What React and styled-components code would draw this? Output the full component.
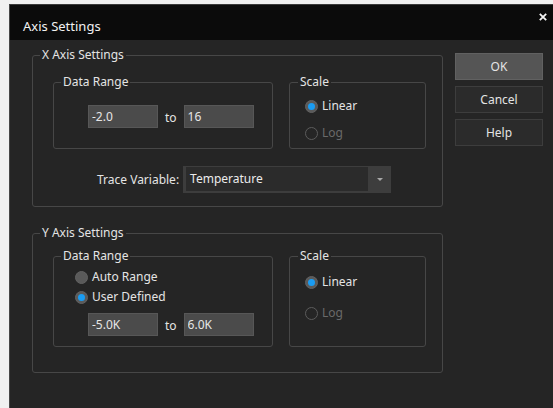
import React from 'react';
import styled, { createGlobalStyle } from 'styled-components';

const GlobalStyle = createGlobalStyle`
  html, body {
    margin: 0;
    padding: 0;
    background: #f0f0f0;
  }
  * { box-sizing: border-box; }
`;

const Dialog = styled.div`
  margin: 4px 0 0 9px;
  width: 544px;
  height: 404px;
  background: #252525;
  border-left: 1px solid #474747;
  border-top: 1px solid #3a3a3a;
  display: flex;
  flex-direction: column;
  font-family: "Noto Sans", "Open Sans", sans-serif;
  font-size: 12px;
  color: #e4e4e4;
  overflow: hidden;
`;

const TitleBar = styled.div`
  height: 35px;
  flex: none;
  background: #0b0b0b;
  display: flex;
  justify-content: space-between;
  align-items: flex-start;
  padding-left: 13px;
`;

const Title = styled.div`
  padding-top: 13px;
  font-size: 13px;
  line-height: 16px;
  color: #f2f2f2;
`;

const CloseButton = styled.button`
  margin: 8px 6px 0 0;
  padding: 0;
  width: 8px;
  height: 8px;
  border: 0;
  background: none;
  display: flex;
  svg { display: block; }
`;

const Body = styled.div`
  flex: 1;
  display: flex;
  align-items: flex-start;
  gap: 12px;
  padding: 7px 0 0 22px;
`;

const Main = styled.div`
  width: 411px;
  display: flex;
  flex-direction: column;
  gap: 18px;
`;

const Group = styled.fieldset`
  margin: 0;
  padding: 0;
  min-width: 0;
  border: 1px solid #474747;
  border-radius: 3px;
  width: ${p => (p.$width ? `${p.$width}px` : 'auto')};
`;

const Legend = styled.legend`
  margin-left: ${p => p.$indent}px;
  padding: 0 2px;
  font-size: 12px;
  line-height: 16px;
  color: #e4e4e4;
`;

const GroupContent = styled.div`
  padding: ${p => p.$pad};
  display: flex;
  flex-direction: column;
  gap: ${p => p.$gap || 0}px;
`;

const GroupRow = styled.div`
  display: flex;
  align-items: stretch;
  gap: 16px;
`;

const RangeRow = styled.div`
  display: flex;
  align-items: center;
  gap: 7px;
  margin-left: ${p => p.$indent || 0}px;
  margin-top: ${p => p.$top || 0}px;
`;

const TextBox = styled.input`
  width: 70px;
  height: 23px;
  padding: 0 0 0 3px;
  margin: 0;
  background: #4b4b4b;
  border: 1px solid #575757;
  color: #e6e6e6;
  font-family: inherit;
  font-size: 12px;
  outline: none;
`;

const To = styled.span`
  line-height: 16px;
  padding-top: 3px;
`;

const RadioRow = styled.label`
  display: flex;
  align-items: center;
  gap: 4px;
  height: 16px;
  line-height: 16px;
  color: ${p => (p.$disabled ? '#6a6a6a' : '#e4e4e4')};
`;

const RadioDot = styled.span`
  width: 13px;
  height: 13px;
  flex: none;
  border-radius: 50%;
  display: flex;
  align-items: center;
  justify-content: center;
  background: ${p => (p.$disabled ? 'transparent' : '#5a5a5a')};
  border: 1px solid ${p => (p.$disabled ? '#5c5c5c' : '#626262')};

  &::after {
    content: '';
    display: ${p => (p.$checked ? 'block' : 'none')};
    width: 7px;
    height: 7px;
    border-radius: 50%;
    background: #1a9cf2;
  }
`;

const TraceRow = styled.div`
  display: flex;
  align-items: center;
  gap: 4px;
  padding-left: 44px;
  margin-top: 17px;
`;

const FieldLabel = styled.span`
  line-height: 16px;
`;

const Combo = styled.div`
  width: 208px;
  height: 27px;
  background: #3d3d3d;
  padding: 1px 0 2px 3px;
  display: flex;
`;

const ComboField = styled.div`
  width: 182px;
  background: #2b2b2b;
  padding-left: 4px;
  line-height: 24px;
  color: #ececec;
`;

const ComboArrow = styled.div`
  flex: 1;
  display: flex;
  align-items: center;
  justify-content: center;
  padding-top: 1px;

  &::after {
    content: '';
    border-left: 3px solid transparent;
    border-right: 3px solid transparent;
    border-top: 3px solid #a8a8a8;
  }
`;

const ButtonColumn = styled.div`
  width: 88px;
  margin-top: 6px;
  display: flex;
  flex-direction: column;
  gap: 6px;
`;

const Button = styled.button`
  height: 27px;
  margin: 0;
  padding: 0;
  font-family: inherit;
  font-size: 12px;
  color: #e4e4e4;
  background: ${p => (p.$primary ? '#555555' : '#2b2b2b')};
  border: 1px solid ${p => (p.$primary ? '#616161' : '#3d3d3d')};
`;

function Radio({ checked, disabled, children }) {
  return (
    <RadioRow $disabled={disabled}>
      <RadioDot $checked={checked} $disabled={disabled} />
      {children}
    </RadioRow>
  );
}

function Range({ from, to, indent, top }) {
  return (
    <RangeRow $indent={indent} $top={top}>
      <TextBox defaultValue={from} />
      <To>to</To>
      <TextBox defaultValue={to} />
    </RangeRow>
  );
}

export default function App() {
  return (
    <>
      <GlobalStyle />
      <Dialog>
        <TitleBar>
          <Title>Axis Settings</Title>
          <CloseButton aria-label="Close">
            <svg width="8" height="8" viewBox="0 0 8 8">
              <path d="M0.8 0.8 L7.2 7.2 M7.2 0.8 L0.8 7.2" stroke="#f4f4f4" strokeWidth="1.8" />
            </svg>
          </CloseButton>
        </TitleBar>
        <Body>
          <Main>
            <Group>
              <Legend $indent={7}>X Axis Settings</Legend>
              <GroupContent $pad="11px 16px 13px 20px">
                <GroupRow>
                  <Group $width={220}>
                    <Legend $indent={7}>Data Range</Legend>
                    <GroupContent $pad="15px 0 20px 34px">
                      <Range from="-2.0" to="16" />
                    </GroupContent>
                  </Group>
                  <Group $width={137}>
                    <Legend $indent={8}>Scale</Legend>
                    <GroupContent $pad="8px 0 0 15px" $gap={11}>
                      <Radio checked>Linear</Radio>
                      <Radio disabled>Log</Radio>
                    </GroupContent>
                  </Group>
                </GroupRow>
                <TraceRow>
                  <FieldLabel>Trace Variable:</FieldLabel>
                  <Combo>
                    <ComboField>Temperature</ComboField>
                    <ComboArrow />
                  </Combo>
                </TraceRow>
              </GroupContent>
            </Group>

            <Group>
              <Legend $indent={7}>Y Axis Settings</Legend>
              <GroupContent $pad="7px 16px 25px 20px">
                <GroupRow>
                  <Group $width={220}>
                    <Legend $indent={7}>Data Range</Legend>
                    <GroupContent $pad="5px 0 10px 21px" $gap={4}>
                      <Radio>Auto Range</Radio>
                      <Radio checked>User Defined</Radio>
                      <Range from="-5.0K" to="6.0K" indent={13} top={4} />
                    </GroupContent>
                  </Group>
                  <Group $width={137}>
                    <Legend $indent={8}>Scale</Legend>
                    <GroupContent $pad="10px 0 0 15px" $gap={15}>
                      <Radio checked>Linear</Radio>
                      <Radio disabled>Log</Radio>
                    </GroupContent>
                  </Group>
                </GroupRow>
              </GroupContent>
            </Group>
          </Main>
          <ButtonColumn>
            <Button $primary>OK</Button>
            <Button>Cancel</Button>
            <Button>Help</Button>
          </ButtonColumn>
        </Body>
      </Dialog>
    </>
  );
}
